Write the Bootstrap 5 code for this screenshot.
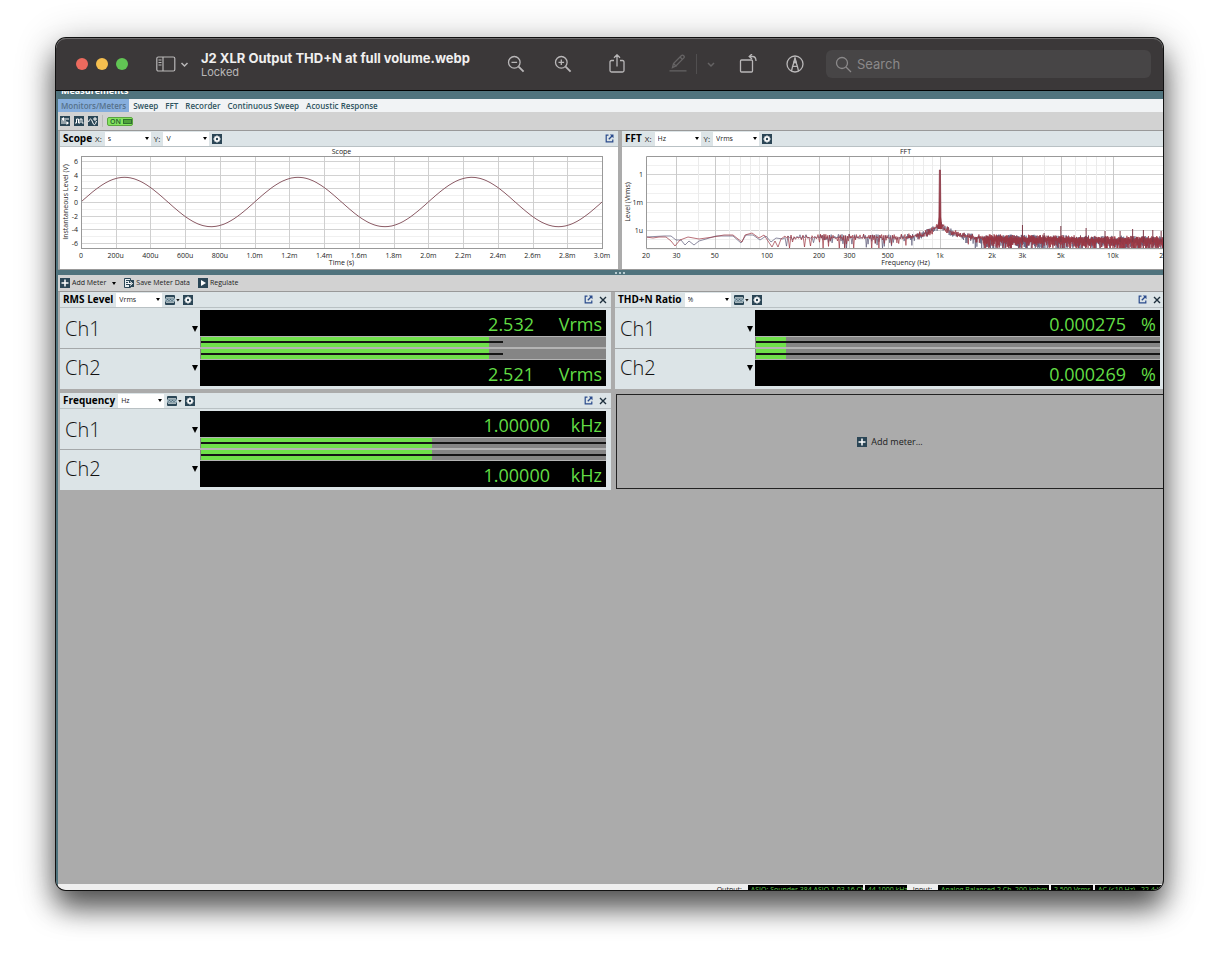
<!DOCTYPE html>
<html lang="en">
<head>
<meta charset="utf-8">
<meta name="viewport" content="width=device-width, initial-scale=1">
<title>J2 XLR Output THD+N at full volume.webp</title>
<link href="https://cdn.jsdelivr.net/npm/bootstrap@5.3.0/dist/css/bootstrap.min.css" rel="stylesheet">
<style>
:root{--teal:#50737d;--ink:#2b4656;--panel:#dce4e7;--grey:#ababab;--green:#6fe04a;--ui:"Open Sans","Noto Sans",sans-serif}
body{background:#fff;font-family:var(--ui);font-size:7px;line-height:12px;color:#1b1b1b;padding:38px 56px 74px;min-height:100vh;overflow:hidden}
button{background:none;border:0;padding:0;color:inherit;font:inherit;line-height:inherit}
svg{display:block;flex:none}
.viewer{border-radius:10px;overflow:hidden;background:var(--grey);box-shadow:0 0 0 1px #111,0 18px 28px rgba(0,0,0,.6),0 6px 40px rgba(0,0,0,.3)}
.titlebar{background:#3b3839;height:53px;padding:0 12px 0 20px;border-bottom:1px solid #000;box-shadow:inset 0 1px 0 #6e6c6d;border-radius:10px 10px 0 0;font-family:Inter,sans-serif;color:#b9b7b8}
.light{width:12px;height:12px;border-radius:50%}
.red{background:#ec6a5e}.amber{background:#f5bf4f}.lime{background:#61c554}
.doc-title{font-size:13px;line-height:16px;font-weight:700;color:#f0efef;white-space:nowrap;margin:0}
.doc-sub{font-size:11px;line-height:13px}
.tool{width:20px;height:20px}
.tools{gap:21px;margin-right:21px}
.gap-a{margin-left:6px}.gap-b{margin-left:13px}.gap-c{margin-left:20px}
.dim{color:#656364}
.vr-dim{width:1px;height:20px;background:#514f50}
.find{width:325px;height:28px;background:#474546;border-radius:6px;padding:0 9px;gap:5px;color:#8b898a}
.find input{background:none;border:0;outline:0;color:#a09e9f;font-size:13px;line-height:16px;padding:0;width:100%}
.find input::placeholder{color:#8b898a;opacity:1}
.app{border-left:2px solid var(--teal)}
.app-head{background:var(--teal);height:8px;overflow:hidden;color:#fff;font-weight:700;font-size:9px;padding-left:3px}
.app-head div{margin-top:-6px}
.tabs{background:#f1f3f5;height:13px;font-size:8px;line-height:13px;font-weight:600;gap:1px}
.tabs a{color:#2f5460;text-decoration:none;padding:0 3px;white-space:nowrap}
.tabs a.on{background:#86aedd;color:#56718a}
.bar{background:#d2d2d2;height:16px;padding:0 2px;gap:8px}
.bar button{gap:2px}
.bar.first{border-bottom:1px solid #999;height:19px;gap:4px}
.switch{width:26px;height:9px;border:1px solid #5aa53f;border-radius:2px;background:#84e35f;color:#24602f;font-size:7px;line-height:7px;font-weight:600;padding:0 1px 0 2px}
.switch i{width:9px;height:5px;background:#4ea23a;border:1px solid #2f7030;flex:none}
.sep{width:1px;height:12px;background:#bbb}
.charts{display:grid;grid-template-columns:558fr 541fr;gap:4px;background:var(--grey);padding-left:2px;border-bottom:1px solid #999}
.panel-head{background:var(--panel);height:16px;border-bottom:1px solid #b9c1c4;padding:0 4px 0 3px;gap:3px}
.panel-head h2{font-size:10px;line-height:15px;font-weight:700;margin:0;color:#000;white-space:nowrap}
.ends{gap:6px}
.pick{appearance:none;border:0;border-radius:0;background:#fff url("data:image/svg+xml,%3Csvg xmlns='http://www.w3.org/2000/svg' viewBox='0 0 4 3'%3E%3Cpath d='M0 0h4L2 3z'/%3E%3C/svg%3E") no-repeat right 2px center/4px 3px;font-size:7px;line-height:13px;height:14px;width:46px;padding:0 8px 0 3px;color:#222}
.axis-tag{font-size:8px}
.plot{background:#fff;width:100%;height:122px;overflow:hidden}
.plot text{font-family:var(--ui);font-size:7px;fill:#222}
.splitter{background:var(--teal);height:5px;gap:2px;padding-left:18px}
.splitter i{width:2px;height:2px;background:#b7cbd0}
.meters{display:grid;grid-template-columns:551fr 548fr;gap:4px;background:var(--grey);padding-left:2px;border-top:1px solid #999}
.meter{background:var(--panel)}
.meter-body{display:grid;grid-template-columns:140px 1fr;padding:2px 5px 3px 0}
.meter.edge .meter-body{padding-right:3px}
.meter.edge .panel-head{padding-right:2px}
.chan{height:38px;padding:0 2px 0 5px;font-size:20px;line-height:40px;font-weight:300;color:#111}
.chan+.chan{border-top:1px solid #a4a8aa}
.readout{background:#000;color:#62dd45;font-size:18px;line-height:28px;height:26px;padding-right:4px}
.unit{display:inline-block;text-align:right;min-width:30px}
.unit.wide{min-width:68px}.unit.mid{min-width:52px}
.level{height:12px;background:#858585;border:solid #b4b4b4;border-width:1px 0;display:grid;align-items:center;padding-left:1px}
.level>*{grid-area:1/1}
.fill{height:100%;background:var(--green)}
.hold{height:2px;background:#151515}
.add-box{border:1px solid #222;border-right:0;margin:1px 0 1px 1px;font-size:9px}
.desk{flex:1}
.status{background:#efefef;height:6px;overflow:hidden;font-size:7px;line-height:12px;gap:2px;white-space:nowrap}
.status b{font-weight:400;background:#000;color:#5fc94c;margin-top:1px;padding:0 3px;height:12px;line-height:10px;overflow:hidden}
.w-l{width:115px}.w-m{width:111px}.w-s{width:42px}.w-e{width:68px}
</style>
</head>
<body class="d-flex flex-column">
<svg width="0" height="0" class="position-absolute" aria-hidden="true">
  <symbol id="gear" viewBox="0 0 10 10"><rect width="10" height="10" fill="#2b4656"/><path d="M5 1.5v7M1.5 5h7M2.6 2.6l4.8 4.8M7.4 2.6L2.6 7.4" stroke="#fff" stroke-width="1.5"/><circle cx="5" cy="5" r="2.5" fill="#fff"/><circle cx="5" cy="5" r="1.2" fill="#2b4656"/></symbol>
  <symbol id="pop" viewBox="0 0 9 9"><path d="M3.5 1.2H1.2v6.6h6.6V5.5" fill="none" stroke="#294a8c" stroke-width="1.2"/><path d="M3.8 5.2L7 2" stroke="#294a8c" stroke-width="1.3"/><path d="M4.8.6h3.7v3.7z" fill="#294a8c"/></symbol>
  <symbol id="close" viewBox="0 0 8 8"><path d="M1 1l6 6M7 1L1 7" stroke="#1d2f3c" stroke-width="1.4"/></symbol>
  <symbol id="view" viewBox="0 0 15 10"><path d="M.5.5h9v9h-9z" fill="#dce4e7" stroke="#2b4656"/><path d="M0 1.500h10M0 8.500h10" stroke="#2b4656" stroke-width="1"/><path d="M0 3.2h10v3.6H0z" fill="#a9bfca"/><path d="M0 3h10M0 7h10" stroke="#2b4656" stroke-width=".6"/><path d="M1 5.7l1.500-1.500L4 5.700l1.500-1.500L7 5.700l1.500-1.500" fill="none" stroke="#2b4656" stroke-width=".8"/><path d="M11.200 4h3.400l-1.700 2.400z" fill="#111"/></symbol>
  <symbol id="plus" viewBox="0 0 10 10"><rect width="10" height="10" fill="#2b4656"/><path d="M5 1.5v7M1.5 5h7" stroke="#fff" stroke-width="1.5"/></symbol>
  <symbol id="down" viewBox="0 0 6 6"><path d="M0 0h6L3 6z" fill="#000"/></symbol>
</svg>

<main class="viewer d-flex flex-column flex-grow-1">
  <header class="titlebar d-flex align-items-center flex-shrink-0">
    <div class="d-flex gap-2"><span class="light red"></span><span class="light amber"></span><span class="light lime"></span></div>
    <button class="d-flex align-items-center gap-1 ms-4 ps-1" aria-label="Sidebar">
      <svg width="20" height="16" viewBox="0 0 20 16" fill="none" stroke="currentColor" stroke-width="1.2"><rect x=".8" y="1" width="18" height="14" rx="1.5"/><path d="M7 1v14M2.5 4h3M2.5 6.5h3M2.5 9h3"/></svg>
      <svg width="9" height="16" viewBox="0 0 9 16" fill="none" stroke="currentColor" stroke-width="1.5"><path d="M1.5 7l3 3 3-3"/></svg>
    </button>
    <div class="flex-grow-1 ms-2 ps-1"><h1 class="doc-title">J2 XLR Output THD+N at full volume.webp</h1><div class="doc-sub">Locked</div></div>
    <div class="d-flex align-items-center tools">
      <button class="tool" aria-label="Zoom out"><svg width="20" height="20" viewBox="0 0 20 20" fill="none" stroke="currentColor" stroke-width="1.3"><circle cx="8.3" cy="8.3" r="5.8"/><path d="M5.5 8.3h5.6"/><path d="M12.6 12.6l5 5" stroke-width="1.9"/></svg></button>
      <button class="tool gap-a" aria-label="Zoom in"><svg width="20" height="20" viewBox="0 0 20 20" fill="none" stroke="currentColor" stroke-width="1.3"><circle cx="8.3" cy="8.3" r="5.8"/><path d="M5.5 8.3h5.6M8.3 5.5v5.6"/><path d="M12.6 12.6l5 5" stroke-width="1.9"/></svg></button>
      <button class="tool gap-b" aria-label="Share"><svg width="20" height="20" viewBox="0 0 20 20" fill="none" stroke="currentColor" stroke-width="1.3"><path d="M7 6.5H4.5Q3 6.5 3 8v8.5Q3 18 4.5 18h11q1.5 0 1.5-1.5V8q0-1.5-1.5-1.5H13M10 12.5V1M7 3.8L10 .8l3 3"/></svg></button>
      <div class="d-flex align-items-center gap-2 gap-c dim">
        <button class="tool" aria-label="Highlight"><svg width="20" height="20" viewBox="0 0 20 20" fill="none" stroke="currentColor" stroke-width="1.3"><path d="M4.5 13.5l1-4 8-8q1-1 2.2.2t.2 2.2l-8 8zM12 3l2.8 2.8M5.500 9.500l3 3M1.500 16.800h17"/></svg></button>
        <span class="vr-dim"></span>
        <button aria-label="Highlight colour"><svg width="12" height="16" viewBox="0 0 12 16" fill="none" stroke="currentColor" stroke-width="1.5"><path d="M3 7l3 3 3-3"/></svg></button>
      </div>
      <button class="tool" aria-label="Rotate"><svg width="20" height="20" viewBox="0 0 20 20" fill="none" stroke="currentColor" stroke-width="1.3"><rect x="2.500" y="6" width="12" height="12" rx="1"/><path d="M12 2.500h2.500q3.500 0 3.500 4.500M14 0l-2.800 2.500L14 5"/></svg></button>
      <button class="tool gap-a" aria-label="Markup"><svg width="20" height="20" viewBox="0 0 20 20" fill="none" stroke="currentColor" stroke-width="1.3"><circle cx="10" cy="10" r="8"/><path d="M6.500 17l1.200-5L10 5.500l2.300 6.500 1.200 5M7.700 12.300h4.600"/><path d="M10 4l1.300 4.500H8.700z" fill="currentColor"/></svg></button>
    </div>
    <label class="find d-flex align-items-center"><svg width="17" height="17" viewBox="0 0 17 17" fill="none" stroke="currentColor" stroke-width="1.3"><circle cx="7" cy="7" r="5.5"/><path d="M11 11l5 5"/></svg><input type="text" placeholder="Search" aria-label="Search"></label>
  </header>

  <div class="app d-flex flex-column flex-grow-1">
    <div class="app-head"><div>Measurements</div></div>
    <nav class="tabs d-flex">
      <a class="on" href="#">Monitors/Meters</a><a href="#">Sweep</a><a href="#">FFT</a><a href="#">Recorder</a><a href="#">Continuous Sweep</a><a href="#">Acoustic Response</a>
    </nav>
    <div class="bar first d-flex align-items-center">
      <button aria-label="Signal path"><svg width="10" height="10" viewBox="0 0 10 10"><rect width="10" height="10" fill="#2b4656"/><path d="M9 3H3M1 7h6M1 5h5" stroke="#fff"/><path d="M4 1v4L1 3zM6.5 5v4L9 7z" fill="#fff"/></svg></button>
      <button aria-label="Generator"><svg width="10" height="10" viewBox="0 0 10 10"><rect width="10" height="10" fill="#2b4656"/><path d="M1 7h1.500V3h2v4h1.500V3h2v4H9.500" fill="none" stroke="#fff"/></svg></button>
      <button aria-label="Monitor"><svg width="10" height="10" viewBox="0 0 10 10"><rect width="10" height="10" fill="#2b4656"/><path d="M.5 6q2-6 4 0t4-1M7 1v4M5 3h4" fill="none" stroke="#fff"/></svg></button>
      <span class="sep"></span>
      <button class="switch d-flex align-items-center justify-content-between" role="switch" aria-checked="true">ON<i></i></button>
    </div>

    <div class="charts">
      <section>
        <div class="panel-head d-flex align-items-center">
          <h2>Scope</h2><label class="axis-tag" for="sx">X:</label><select class="pick" id="sx"><option>s</option></select>
          <label class="axis-tag" for="sy">Y:</label><select class="pick" id="sy"><option>V</option></select>
          <button aria-label="Scope settings"><svg width="10" height="10"><use href="#gear"/></svg></button>
          <button class="ms-auto" aria-label="Undock"><svg width="9" height="9"><use href="#pop"/></svg></button>
        </div>
        <svg class="plot" id="scope" role="img" aria-label="Scope"></svg>
      </section>
      <section>
        <div class="panel-head d-flex align-items-center">
          <h2>FFT</h2><label class="axis-tag" for="fx">X:</label><select class="pick" id="fx"><option>Hz</option></select>
          <label class="axis-tag" for="fy">Y:</label><select class="pick" id="fy"><option>Vrms</option></select>
          <button aria-label="FFT settings"><svg width="10" height="10"><use href="#gear"/></svg></button>
        </div>
        <svg class="plot" id="fft" role="img" aria-label="FFT"></svg>
      </section>
    </div>
    <div class="splitter d-flex justify-content-center align-items-center"><i></i><i></i><i></i></div>
    <div class="bar d-flex align-items-center">
      <button class="d-flex align-items-center"><svg width="10" height="10"><use href="#plus"/></svg>Add Meter<svg class="ms-1" width="4" height="3" viewBox="0 0 6 6" preserveAspectRatio="none"><use href="#down"/></svg></button>
      <button class="d-flex align-items-center"><svg width="10" height="10" viewBox="0 0 10 10"><path d="M.5.5h6v9h-6z" fill="#e8eef0" stroke="#2b4656"/><path d="M2 2.500h3M2 4.500h2M2 6.500h3" stroke="#2b4656"/><path d="M5 2h5v7H5z" fill="#2b4656"/><path d="M4 5.500h3.500M6 3.500l2.500 2L6 7.500" fill="none" stroke="#fff"/></svg>Save Meter Data</button>
      <button class="d-flex align-items-center"><svg width="10" height="10" viewBox="0 0 10 10"><rect width="10" height="10" fill="#2b4656"/><path d="M3 2l5 3-5 3z" fill="#fff"/></svg>Regulate</button>
    </div>

    <div class="meters" id="meters">
      <button class="add-box d-flex align-items-center justify-content-center gap-1"><svg width="10" height="10"><use href="#plus"/></svg>Add meter...</button>
    </div>
    <div class="desk"></div>
    <footer class="status d-flex justify-content-end">
      <span class="pe-1">Output:</span><b class="w-l">ASIO: Sounder 384 ASIO 1.03 16 Ch</b><b class="w-s">44.1000 kHz</b><span class="px-1">Input:</span><b class="w-m">Analog Balanced 2 Ch, 200 kohm</b><b class="w-s">2.500 Vrms</b><b class="w-e">AC (&lt;10 Hz) - 22.4 k</b>
    </footer>
  </div>
</main>

<script src="https://cdn.jsdelivr.net/npm/bootstrap@5.3.0/dist/js/bootstrap.bundle.min.js"></script>
<script>
// Meters: name, unit choice, readings, bar fill % and hold line %
const meters = [
  {name:'RMS Level', pick:'Vrms', vals:['2.532','2.521'], unit:'Vrms', size:'wide', fill:71, hold:74.5},
  {name:'THD+N Ratio', pick:'%', vals:['0.000275','0.000269'], unit:'%', size:'', fill:7.5, hold:100, edge:true},
  {name:'Frequency', pick:'Hz', vals:['1.00000','1.00000'], unit:'kHz', size:'mid', fill:57, hold:100}
];
const add = document.querySelector('.add-box');
meters.forEach(m => {
  const bar = `<div class="level"><div class="fill" style="width:${m.fill}%"></div><div class="hold" style="width:${m.hold}%"></div></div>`;
  const read = v => `<div class="readout text-end">${v}<span class="unit ${m.size}">${m.unit}</span></div>`;
  const chan = n => `<div class="chan d-flex align-items-center justify-content-between">${n}<button aria-label="${n} menu"><svg width="6" height="6"><use href="#down"/></svg></button></div>`;
  add.insertAdjacentHTML('beforebegin', `<section class="meter ${m.edge ? 'edge' : ''}">
    <div class="panel-head d-flex align-items-center"><h2>${m.name}</h2>
      <select class="pick" aria-label="${m.name} unit"><option>${m.pick}</option></select>
      <button aria-label="View"><svg width="15" height="10"><use href="#view"/></svg></button>
      <button aria-label="Settings"><svg width="10" height="10"><use href="#gear"/></svg></button>
      <div class="ends d-flex align-items-center ms-auto">
        <button aria-label="Undock"><svg width="9" height="9"><use href="#pop"/></svg></button>
        <button aria-label="Close"><svg width="8" height="8"><use href="#close"/></svg></button>
      </div>
    </div>
    <div class="meter-body"><div>${chan('Ch1')}${chan('Ch2')}</div><div>${read(m.vals[0])}${bar}${bar}${read(m.vals[1])}</div></div>
  </section>`);
});

const line = (x1, y1, x2, y2, c) => `<path d="M${x1} ${y1}L${x2} ${y2}" stroke="${c}"/>`;
const text = (x, y, s, a = 'middle') => `<text x="${x}" y="${y}" text-anchor="${a}">${s}</text>`;
const trace = (pts, c, w) => `<polyline points="${pts.map(p => p[0].toFixed(1) + ',' + p[1].toFixed(1)).join(' ')}" fill="none" stroke="${c}" stroke-width="${w}"/>`;
const TOP = 9, BOT = 101;

function drawScope() {
  const el = document.getElementById('scope'), W = el.clientWidth, L = 21, R = W - 16, u = 6.85, mid = 55;
  let s = '';
  for (let v = -6; v <= 6; v++) s += line(L, Math.round(mid - v * u) + .5, R, Math.round(mid - v * u) + .5, v % 2 ? '#f0f0f0' : '#d2d2d2');
  for (let v = -6; v <= 6; v += 2) s += text(L - 3, mid - v * u + 3, v, 'end');
  for (let i = 0; i <= 15; i++) {
    const x = L + (R - L) * i / 15, t = i * 200;
    s += line(Math.round(x) + .5, TOP, Math.round(x) + .5, BOT, '#cfcfcf') + text(x, 111, t === 0 ? '0' : t < 1000 ? t + 'u' : (t / 1000).toFixed(1) + 'm');
  }
  const pts = [];
  for (let x = L; x <= R; x++) pts.push([x, mid - 3.6 * u * Math.sin((x - L) / (R - L) * 6 * Math.PI)]);
  s += trace(pts, '#8a5a64', 1) + `<rect x="${L}.5" y="${TOP}.5" width="${R - L}" height="92" fill="none" stroke="#999"/>`;
  s += text((L + R) / 2, 7, 'Scope') + text((L + R) / 2, 118, 'Time (s)') + `<text transform="translate(8 ${mid}) rotate(-90)" text-anchor="middle">Instantaneous Level (V)</text>`;
  el.innerHTML = s;
}

function drawFft() {
  const el = document.getElementById('fft'), W = el.clientWidth, L = 24, D = (W + 2 - L) / 3;
  const X = f => L + D * Math.log10(f / 20);
  let s = '';
  for (let k = 0; k < 10; k++) { const y = Math.round(18 + 9.3 * k) + .5; s += line(L, y, W, y, '#f0f0f0'); }
  [[27, '1'], [55, '1m'], [83, '1u']].forEach(([y, t]) => s += line(L, y + .5, W, y + .5, '#d2d2d2') + text(L - 3, y + 3, t, 'end'));
  for (let d = 10; d < 20000; d *= 10) for (let k = 1; k < 10; k++) {
    const f = d * k; if (f <= 20) continue;
    const x = Math.round(X(f)) + .5;
    s += line(x, TOP, x, BOT, [1, 2, 3, 5].includes(k) ? '#cacaca' : '#ebebeb');
  }
  [[20, '20'], [30, '30'], [50, '50'], [100, '100'], [200, '200'], [300, '300'], [500, '500'], [1000, '1k'], [2000, '2k'], [3000, '3k'], [5000, '5k'], [10000, '10k'], [20000, '20k']].forEach(([f, t]) => s += text(X(f), 111, t));
  const low = {
    red: [[0,90],[7,91],[13,90],[20,90],[25,94],[29,99],[34,93],[42,90],[53,92],[67,90],[78,88],[87,88],[92,92],[96,95],[99,88],[106,86],[113,91],[118,88],[122,94],[126,100],[129,94],[132,100],[135,92]],
    blue: [[0,90],[18,89],[25,89],[30,93],[35,93],[39,98],[43,94],[48,98],[53,94],[60,92],[70,89],[87,89],[95,96],[100,88],[107,88],[114,93],[120,89],[125,95],[130,91],[137,92]]
  };
  // Seeded generator keeps the noise floor identical on every load
  const series = (base, seed) => {
    let r = seed; const rnd = () => (r = (r * 16807) % 2147483647) / 2147483647;
    const pts = base.map(p => [L + p[0] * D / 173, p[1]]);
    let x = L + 139 * D / 173, flip = 0;
    while (x < W + 4) {
      const t = (x - L) / D, near = Math.abs(t - 1.699);
      let top = 87 + Math.max(0, t - 1.9) * 2, dep = 4 + Math.pow(rnd(), 3) * 13;
      if (t > 1.95) dep = 6 + rnd() * 9;
      if (near < .24) top -= Math.pow(1 - near / .24, 2.5) * 13;
      if (near < .15) dep = 3 + rnd() * 5;
      pts.push([x, flip ? Math.min(BOT, top + dep) : top + rnd() * 4]);
      flip = !flip; x += t < 1 ? 1.5 : t < 1.5 ? .9 : t < 1.9 ? .6 : .4;
    }
    return pts;
  };
  const spikes = [[3000,78],[4000,86],[5000,79],[7000,81],[9000,84],[11000,84],[13000,82],[15000,83],[17000,83],[19000,84]];
  s += trace(series(low.blue, 4211), '#5b5a78', .7) + trace(series(low.red, 977), '#9c3540', .7);
  spikes.forEach(([f, y]) => s += line(X(f), y, X(f), 95, '#7c3a48'));
  const p = X(1000);
  s += `<path d="M${p - 2} 82L${p - 1} 70L${p - .5} 23h1L${p + 1} 70L${p + 2} 82" fill="#9c3540" stroke="#8c3b4a" stroke-width=".8"/>`;
  s += `<path d="M${W + 2} ${TOP}.5H${L}.5V${BOT}.5H${W + 2}" fill="none" stroke="#999"/>`;
  s += text((L + W + 2) / 2, 7, 'FFT') + text((L + W + 2) / 2, 118, 'Frequency (Hz)') + `<text transform="translate(8 55) rotate(-90)" text-anchor="middle">Level (Vrms)</text>`;
  el.innerHTML = s;
}
const draw = () => { drawScope(); drawFft(); };
draw();
addEventListener('resize', draw);
</script>
</body>
</html>
